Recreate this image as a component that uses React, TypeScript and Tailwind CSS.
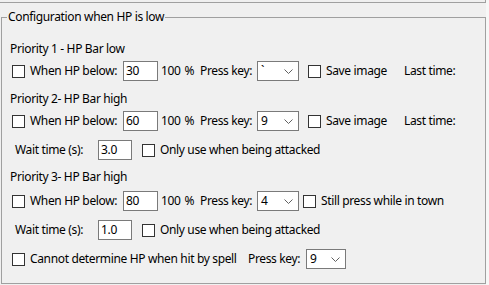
import React from "react";

const font = { fontFamily: '"Noto Sans", "Open Sans", Arial, sans-serif' };

function Check() {
  return <span className="inline-block w-[13px] h-[13px] border border-[#333333] bg-white shrink-0" />;
}

function TextBox({ value, w }: { value: string; w: string }) {
  return (
    <div className={`${w} h-[20px] shrink-0 border border-[#7a7a7a] bg-white flex items-center pl-[2px] leading-none`}>
      {value}
    </div>
  );
}

function Select({ value, w }: { value: string; w: string }) {
  return (
    <div className={`${w} h-[20px] shrink-0 border border-[#7a7a7a] bg-white flex items-center justify-between pl-[3px] pr-[5px] leading-none`}>
      <span>{value}</span>
      <svg width="9" height="5" viewBox="0 0 9 5" className="shrink-0">
        <path d="M0.5 0.5 L4.5 4.5 L8.5 0.5" fill="none" stroke="#606060" strokeWidth="1" />
      </svg>
    </div>
  );
}

function HpRow({ hp, keyVal, extra }: { hp: string; keyVal: string; extra: React.ReactNode }) {
  return (
    <div className="flex items-center h-[20px] pl-[10px]">
      <div className="w-[111px] flex items-center gap-[5px] shrink-0">
        <Check />
        <span className="whitespace-nowrap">When HP below:</span>
      </div>
      <TextBox value={hp} w="w-[35px]" />
      <span className="ml-[3px] w-[39px] shrink-0 whitespace-nowrap">100<span className="ml-[4px]">%</span></span>
      <span className="w-[57px] shrink-0 whitespace-nowrap">Press key:</span>
      <Select value={keyVal} w="w-[42px]" />
      {extra}
    </div>
  );
}

function WaitRow({ v }: { v: string }) {
  return (
    <div className="flex items-center h-[20px] pl-[13px]">
      <span className="w-[83px] shrink-0 whitespace-nowrap">Wait time (s):</span>
      <TextBox value={v} w="w-[34px]" />
      <div className="ml-[10px] flex items-center gap-[5px]">
        <Check />
        <span className="whitespace-nowrap">Only use when being attacked</span>
      </div>
    </div>
  );
}

export default function App() {
  return (
    <div className="w-[489px] h-[285px] bg-[#f0f0f0] text-[12px] tracking-[-0.35px] text-black overflow-hidden flex" style={font}>
      <div className="w-[486px] shrink-0 flex flex-col">
        <div className="h-[3px] border-b border-r border-[#a0a0a0] shrink-0" />
        <div className="relative mt-[14px] ml-[1px] h-[267px] border border-[#a0a0a0] flex flex-col">
          <span className="absolute -top-[9px] left-[5px] bg-[#f0f0f0] px-[1px] leading-[16px] whitespace-nowrap">
            Configuration when HP is low
          </span>
          <div className="mt-[23px] pl-[8px] h-[16px] leading-[16px]">Priority 1 - HP Bar low</div>
          <div className="mt-[4px]">
            <HpRow
              hp="30"
              keyVal="`"
              extra={
                <>
                  <div className="ml-[9px] w-[96px] flex items-center gap-[5px] shrink-0">
                    <Check />
                    <span className="whitespace-nowrap">Save image</span>
                  </div>
                  <span className="whitespace-nowrap">Last time:</span>
                </>
              }
            />
          </div>
          <div className="mt-[10px] pl-[8px] h-[16px] leading-[16px]">Priority 2- HP Bar high</div>
          <div className="mt-[4px]">
            <HpRow
              hp="60"
              keyVal="9"
              extra={
                <>
                  <div className="ml-[9px] w-[96px] flex items-center gap-[5px] shrink-0">
                    <Check />
                    <span className="whitespace-nowrap">Save image</span>
                  </div>
                  <span className="whitespace-nowrap">Last time:</span>
                </>
              }
            />
          </div>
          <div className="mt-[9px]">
            <WaitRow v="3.0" />
          </div>
          <div className="mt-[9px] pl-[8px] h-[16px] leading-[16px]">Priority 3- HP Bar high</div>
          <div className="mt-[6px]">
            <HpRow
              hp="80"
              keyVal="4"
              extra={
                <div className="ml-[4px] flex items-center gap-[5px] shrink-0">
                  <Check />
                  <span className="whitespace-nowrap">Still press while in town</span>
                </div>
              }
            />
          </div>
          <div className="mt-[9px]">
            <WaitRow v="1.0" />
          </div>
          <div className="mt-[9px] flex items-center h-[20px] pl-[10px]">
            <div className="w-[236px] flex items-center gap-[5px] shrink-0">
              <Check />
              <span className="whitespace-nowrap">Cannot determine HP when hit by spell</span>
            </div>
            <span className="w-[58px] shrink-0 whitespace-nowrap">Press key:</span>
            <Select value="9" w="w-[40px]" />
          </div>
        </div>
      </div>
      <div className="flex-1 bg-[#f7f7f7]" />
    </div>
  );
}
